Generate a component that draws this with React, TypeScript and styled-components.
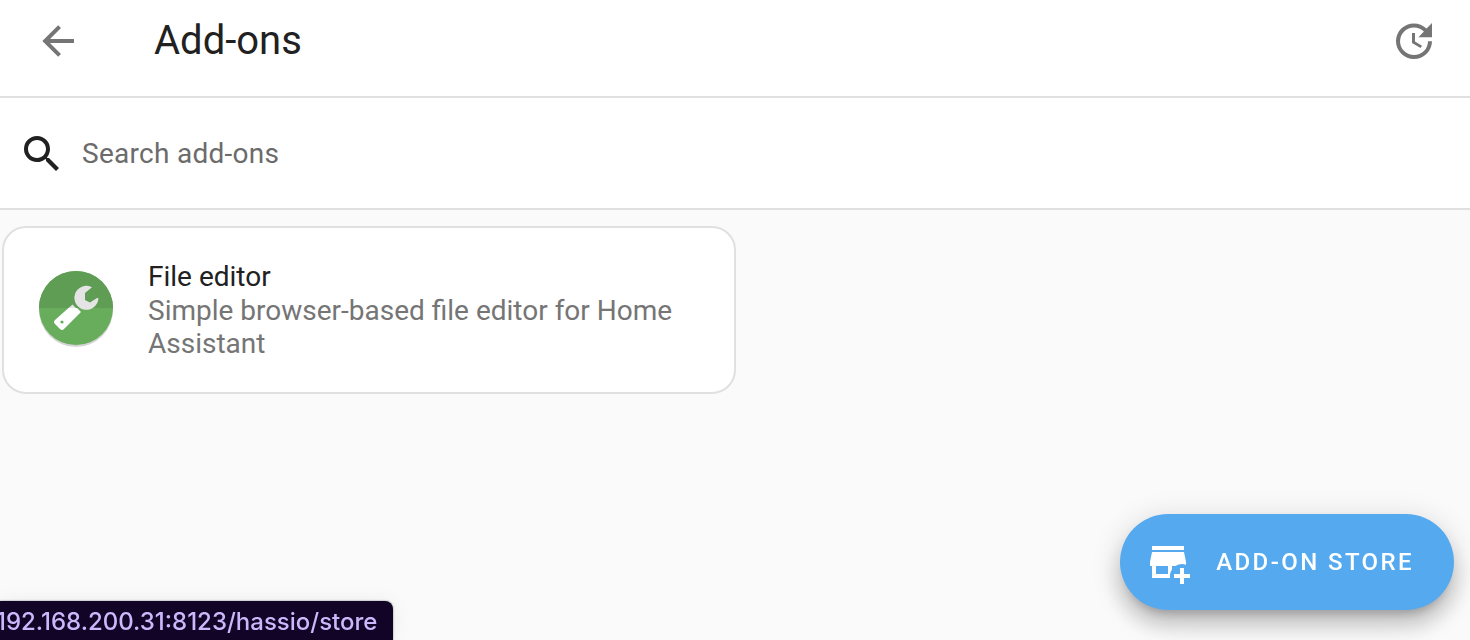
import React from "react";
import styled, { createGlobalStyle } from "styled-components";

const GlobalStyle = createGlobalStyle`
  *, *::before, *::after { box-sizing: border-box; }
  body {
    margin: 0;
    background: #fafafa;
    color: #212121;
    font-family: Roboto, "Liberation Sans", sans-serif;
    -webkit-font-smoothing: antialiased;
  }
`;

const Page = styled.div`
  min-height: 100vh;
  overflow: hidden;
`;

const Toolbar = styled.header`
  display: flex;
  align-items: center;
  padding: 0 32px 14px 34px;
  height: 98px;
  background: #fff;
  border-bottom: 2px solid #e0e0e0;
`;

const Title = styled.h1`
  flex: 1;
  margin: 0 0 0 72px;
  font-size: 40px;
  line-height: 48px;
  font-weight: 400;
`;

const IconButton = styled.button`
  display: flex;
  padding: 0;
  border: 0;
  background: none;
  color: #757575;
  cursor: pointer;
`;

const Icon = styled.svg`
  display: block;
  flex: none;
  width: 48px;
  height: 48px;
  fill: currentColor;
  fill-rule: evenodd;
`;

const SearchBar = styled.label`
  display: flex;
  align-items: center;
  gap: 16px;
  height: 112px;
  padding: 2px 18px 0;
  background: #fff;
  border-bottom: 2px solid #e0e0e0;
`;

const SearchInput = styled.input`
  flex: 1;
  min-width: 0;
  padding: 0;
  border: 0;
  outline: 0;
  background: none;
  font: inherit;
  font-size: 28px;
  line-height: 36px;
  letter-spacing: 0.01em;
  color: #212121;
  &::placeholder { color: #6b6b6b; opacity: 1; }
`;

const Cards = styled.main`
  display: grid;
  grid-template-columns: repeat(2, 1fr);
  padding: 16px 0 16px 2px;
`;

const Card = styled.article`
  display: flex;
  align-items: center;
  gap: 34px;
  padding: 32px 34px;
  background: #fff;
  border: 2px solid #e0e0e0;
  border-radius: 24px;
`;

const AddonLogo = styled.svg`
  flex: none;
  width: 76px;
  height: 80px;
`;

const AddonName = styled.h2`
  margin: 0;
  font-size: 28px;
  line-height: 34px;
  font-weight: 400;
`;

const AddonDescription = styled.p`
  margin: 0;
  font-size: 28px;
  line-height: 33px;
  color: #757575;
`;

const StoreButton = styled.a`
  position: fixed;
  right: 16px;
  bottom: 30px;
  display: flex;
  align-items: center;
  gap: 24px;
  height: 96px;
  padding: 0 40px 0 24px;
  border-radius: 48px;
  background: #54a9ef;
  color: #fff;
  font-size: 24px;
  font-weight: 500;
  letter-spacing: 0.1em;
  text-decoration: none;
  box-shadow: 0 10px 10px -6px rgba(0, 0, 0, 0.2),
    0 16px 20px 2px rgba(0, 0, 0, 0.14), 0 6px 28px 4px rgba(0, 0, 0, 0.12);
`;

const LinkStatus = styled.div`
  position: fixed;
  left: 0;
  bottom: 0;
  height: 39px;
  padding-right: 16px;
  overflow: hidden;
  border-top-right-radius: 8px;
  background: #110426;
  color: #c9b8fb;
  font-family: Inter, "Liberation Sans", sans-serif;
  font-size: 24px;
  font-weight: 500;
  line-height: 41px;
  white-space: nowrap;
  box-shadow: 0 0 2px rgba(0, 0, 0, 0.5), 0 0 20px rgba(0, 0, 0, 0.06);
`;

const StatusText = styled.span`
  display: block;
  margin-left: -4px;
`;

const MdiIcon = ({ path }: { path: string }) => (
  <Icon viewBox="0 0 24 24" aria-hidden="true">
    <path d={path} />
  </Icon>
);

const arrowLeft =
  "M20,11V13H8L13.5,18.5L12.08,19.92L4.16,12L12.08,4.08L13.5,5.5L8,11H20Z";
const update =
  "M21,10.12H14.22L16.96,7.3C14.23,4.6 9.81,4.5 7.08,7.2C4.35,9.91 4.35,14.28 7.08,17C9.81,19.7 14.23,19.7 16.96,17C18.32,15.65 19,14.08 19,12.1H21C21,14.08 20.12,16.65 18.36,18.39C14.85,21.87 9.15,21.87 5.64,18.39C2.14,14.92 2.11,9.28 5.62,5.81C9.13,2.34 14.76,2.34 18.27,5.81L21,3V10.12M12.5,8V12.25L16,14.33L15.28,15.54L11,13V8H12.5Z";
const magnify =
  "M9.5,3A6.5,6.5 0 0,1 16,9.5C16,11.11 15.41,12.59 14.44,13.73L14.71,14H15.5L20.5,19L19,20.5L14,15.5V14.71L13.73,14.44C12.59,15.41 11.11,16 9.5,16A6.5,6.5 0 0,1 3,9.5A6.5,6.5 0 0,1 9.5,3M9.5,5C7,5 5,7 5,9.5C5,12 7,14 9.5,14C12,14 14,12 14,9.5C14,7 12,5 9.5,5Z";
const storePlus =
  "M4,4H20V6H4ZM4,7H20L21,12V13.34A6,6 0 0,0 15.69,14H14V15.69A6,6 0 0,0 13.08,20H4V14H3V12ZM6,14H12V18H6ZM18,15H20V18H23V20H20V23H18V20H15V18H18Z";

export default function App() {
  return (
    <Page>
      <GlobalStyle />
      <Toolbar>
        <IconButton aria-label="Back">
          <MdiIcon path={arrowLeft} />
        </IconButton>
        <Title>Add-ons</Title>
        <IconButton aria-label="Check for updates">
          <MdiIcon path={update} />
        </IconButton>
      </Toolbar>
      <SearchBar>
        <MdiIcon path={magnify} />
        <SearchInput type="text" placeholder="Search add-ons" aria-label="Search add-ons" />
      </SearchBar>
      <Cards>
        <Card>
          <AddonLogo viewBox="0 -1 76 80" aria-hidden="true">
            <circle cx="38" cy="39" r="37" fill="#d5d5d5" />
            <circle cx="38" cy="37" r="37" fill="#68ad5c" />
            <path d="M1 37A37 37 0 0 1 75 37Z" fill="#5f9c54" />
            <path d="M30.5 37H39L43 41L26 58Q24 60 22 58L17 53Q15 51 17 49Z" fill="#fff" />
            <path d="M34.5 33.5L38 37H30.5Z" fill="#e4e4e4" />
            <path d="M54 16.2A12 12 0 1 0 60.4 27L59 27L52 31.5L47 29V22Z" fill="#e4e4e4" />
            <circle cx="24" cy="51" r="1.6" fill="#68ad5c" />
          </AddonLogo>
          <div>
            <AddonName>File editor</AddonName>
            <AddonDescription>
              Simple browser-based file editor for Home Assistant
            </AddonDescription>
          </div>
        </Card>
      </Cards>
      <StoreButton href="/hassio/store">
        <MdiIcon path={storePlus} />
        ADD-ON STORE
      </StoreButton>
      <LinkStatus>
        <StatusText>192.168.200.31:8123/hassio/store</StatusText>
      </LinkStatus>
    </Page>
  );
}
